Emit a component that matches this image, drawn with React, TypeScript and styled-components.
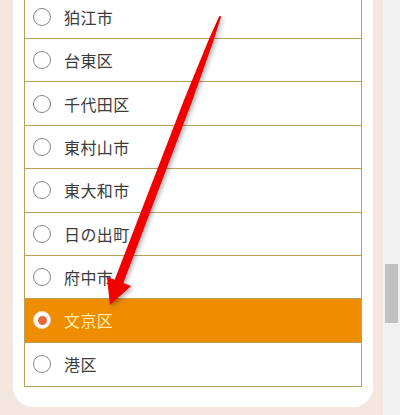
import React from "react";
import styled, { createGlobalStyle } from "styled-components";

const Global = createGlobalStyle`
  html, body { margin: 0; padding: 0; }
  body {
    overflow: hidden;
    background: #f3e7df;
    font-family: "Noto Sans CJK JP", "Noto Sans", sans-serif;
  }
`;

const Page = styled.div`
  position: relative;
  display: flex;
  width: 400px;
  height: 415px;
  overflow: hidden;
`;

const Main = styled.main`
  flex: 1;
  display: flex;
  flex-direction: column;
  justify-content: flex-end;
  overflow: hidden;
  padding: 0 10px 8px 13px;
  background: #f3e7df;
`;

const Card = styled.section`
  flex-shrink: 0;
  background: #ffffff;
  border-radius: 0 0 20px 20px;
  padding: 0 11px 20px 11px;
`;

const List = styled.div`
  border: 1px solid #b9a257;
  display: flex;
  flex-direction: column;
`;

const Row = styled.label<{ $selected?: boolean; $last?: boolean }>`
  box-sizing: border-box;
  height: 43.375px;
  display: flex;
  align-items: center;
  gap: 13px;
  padding-left: 8px;
  border-bottom: ${(p) => (p.$last ? "none" : "1px solid #b9a257")};
  background: ${(p) => (p.$selected ? "#ef8c00" : "#ffffff")};
  color: ${(p) => (p.$selected ? "#ffeaa6" : "#3c3c3c")};
  font-size: 16px;
  line-height: 1;
`;

const Radio = styled.span<{ $checked?: boolean }>`
  box-sizing: border-box;
  width: 18px;
  height: 18px;
  border-radius: 50%;
  flex-shrink: 0;
  display: flex;
  align-items: center;
  justify-content: center;
  background: #ffffff;
  border: 1px solid ${(p) => (p.$checked ? "#f3dcc4" : "#858585")};
`;

const Dot = styled.span`
  width: 9px;
  height: 9px;
  border-radius: 50%;
  background: #e5683a;
`;

const Label = styled.span`
  letter-spacing: 0.4px;
`;

const ScrollTrack = styled.div`
  width: 17px;
  flex-shrink: 0;
  background: #f1f1f1;
  padding: 264px 2px 0 2px;
  box-sizing: border-box;
`;

const ScrollThumb = styled.div`
  height: 59px;
  background: #c1c1c1;
`;

const ArrowLayer = styled.svg`
  position: absolute;
  left: 0;
  top: 0;
  pointer-events: none;
  filter: drop-shadow(2px 2px 2px rgba(0, 0, 0, 0.3));
`;

const items = [
  "狛江市",
  "台東区",
  "千代田区",
  "東村山市",
  "東大和市",
  "日の出町",
  "府中市",
  "文京区",
  "港区",
];

export default function App() {
  const selected = "文京区";
  return (
    <>
      <Global />
      <Page>
        <Main>
          <Card>
            <List>
              {items.map((name, i) => {
                const sel = name === selected;
                return (
                  <Row key={name} $selected={sel} $last={i === items.length - 1}>
                    <Radio $checked={sel}>{sel && <Dot />}</Radio>
                    <Label>{name}</Label>
                  </Row>
                );
              })}
            </List>
          </Card>
        </Main>
        <ScrollTrack>
          <ScrollThumb />
        </ScrollTrack>
        <ArrowLayer width="400" height="415" viewBox="0 0 400 415">
          <polygon
            fill="#f20000"
            points="220.9,17.4 213.4,40.9 192.0,101.4 123.3,282.9 131.1,285.9 110,305 106.9,276.7 114.7,279.7 184.6,98.6 209.0,39.1 219.1,16.6"
          />
          <circle cx="220" cy="17" r="1" fill="#f20000" />
        </ArrowLayer>
      </Page>
    </>
  );
}
